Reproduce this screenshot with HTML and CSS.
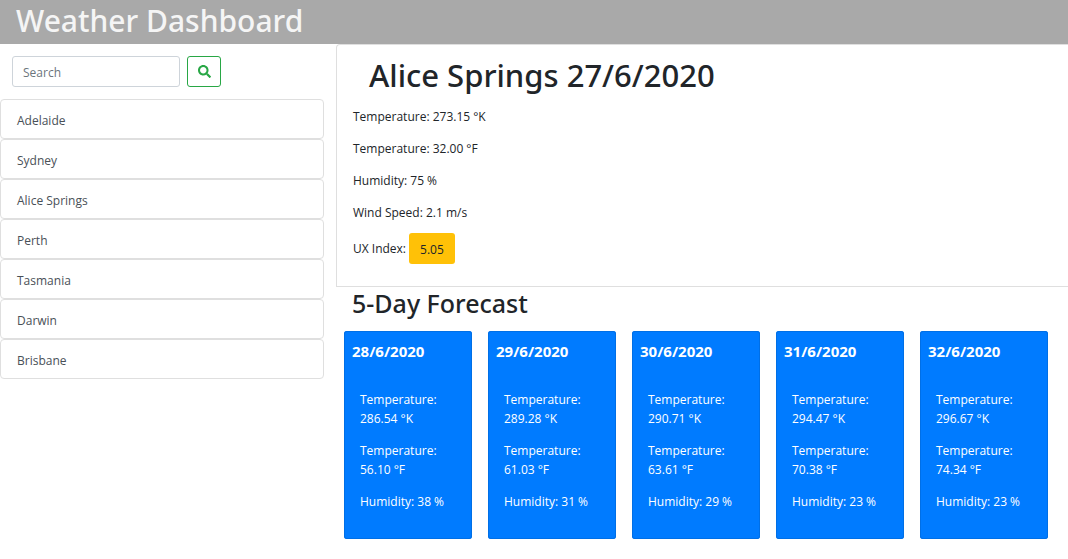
FILE: index.html
```html
<!DOCTYPE html>
<html lang="en">
<head>
<meta charset="utf-8">
<meta name="viewport" content="width=device-width, initial-scale=1">
<title>Weather Dashboard</title>
<link rel="stylesheet" href="styles.css">
</head>
<body>
<header class="site-header"><h1 class="site-title">Weather Dashboard</h1></header>
<div class="layout">
  <aside class="sidebar">
    <form class="search">
      <input class="search-input" type="search" placeholder="Search" aria-label="Search">
      <button class="search-button" type="button" aria-label="Search for a city">
        <svg class="search-icon" viewBox="0 0 512 512" aria-hidden="true"><path fill="currentColor" d="M505 442.700 405.300 343c-4.500-4.500-10.600-7-17-7H372c27.600-35.300 44-79.700 44-128C416 93.100 322.900 0 208 0S0 93.100 0 208s93.100 208 208 208c48.300 0 92.700-16.400 128-44v16.300c0 6.400 2.500 12.500 7 17l99.700 99.700c9.400 9.400 24.600 9.400 33.900 0l28.300-28.300c9.400-9.400 9.400-24.600.1-34zM208 336c-70.700 0-128-57.200-128-128 0-70.700 57.200-128 128-128 70.700 0 128 57.200 128 128 0 70.700-57.200 128-128 128z"/></svg>
      </button>
    </form>
    <nav class="cities" aria-label="Cities">
      <button class="city" type="button">Adelaide</button>
      <button class="city" type="button">Sydney</button>
      <button class="city" type="button">Alice Springs</button>
      <button class="city" type="button">Perth</button>
      <button class="city" type="button">Tasmania</button>
      <button class="city" type="button">Darwin</button>
      <button class="city" type="button">Brisbane</button>
    </nav>
  </aside>
  <main class="content">
    <section class="current">
      <h2 class="current-title">Alice Springs 27/6/2020</h2>
      <div class="current-readings">
        <p class="reading">Temperature: 273.15 °K</p>
        <p class="reading">Temperature: 32.00 °F</p>
        <p class="reading">Humidity: 75 %</p>
        <p class="reading">Wind Speed: 2.1 m/s</p>
      </div>
      <p class="index-row">UX Index: <button class="index-value" type="button">5.05</button></p>
    </section>
    <section class="forecast">
      <h2 class="forecast-title">5-Day Forecast</h2>
      <div class="days">
        <article class="day"><h3 class="day-title">28/6/2020</h3><div class="day-body"><p class="reading">Temperature: 286.54 °K</p><p class="reading">Temperature: 56.10 °F</p><p class="reading">Humidity: 38 %</p></div></article>
        <article class="day"><h3 class="day-title">29/6/2020</h3><div class="day-body"><p class="reading">Temperature: 289.28 °K</p><p class="reading">Temperature: 61.03 °F</p><p class="reading">Humidity: 31 %</p></div></article>
        <article class="day"><h3 class="day-title">30/6/2020</h3><div class="day-body"><p class="reading">Temperature: 290.71 °K</p><p class="reading">Temperature: 63.61 °F</p><p class="reading">Humidity: 29 %</p></div></article>
        <article class="day"><h3 class="day-title">31/6/2020</h3><div class="day-body"><p class="reading">Temperature: 294.47 °K</p><p class="reading">Temperature: 70.38 °F</p><p class="reading">Humidity: 23 %</p></div></article>
        <article class="day"><h3 class="day-title">32/6/2020</h3><div class="day-body"><p class="reading">Temperature: 296.67 °K</p><p class="reading">Temperature: 74.34 °F</p><p class="reading">Humidity: 23 %</p></div></article>
      </div>
    </section>
  </main>
</div>
</body>
</html>
```
FILE: styles.css
```css
* { box-sizing: border-box; }
body {
  margin: 0;
  font-family: "Segoe UI", "Open Sans", "Noto Sans", sans-serif;
  font-size: 12px;
  line-height: 19px;
  color: #212529;
  background: #fff;
}
h1, h2, h3, p { margin: 0; }
h1, h2 { font-family: "Segoe UI", "Noto Sans", sans-serif; font-weight: 500; }
input, button { font: inherit; }
.site-header { padding: 2px 16px 4px; background: #a9a9a9; }
.site-title { font-size: 30px; line-height: 38px; color: #f5f5f5; }
.layout { display: grid; grid-template-columns: 324fr 732fr; gap: 12px; }
.search { display: flex; gap: 7px; padding: 12px; }
.search-input {
  width: 56%;
  height: 31px;
  padding: 5px 10px 3px;
  border: 1px solid #ced4da;
  border-radius: 3px;
  color: #495057;
  background: #fff;
  appearance: none;
}
.search-input::placeholder { color: #6c757d; opacity: 1; }
.search-button {
  display: flex;
  align-items: center;
  justify-content: center;
  width: 34px;
  height: 31px;
  padding: 0;
  border: 1px solid #28a745;
  border-radius: 3px;
  color: #28a745;
  background: #fff;
}
.search-icon { width: 13px; height: 13px; }
.cities { display: flex; flex-direction: column; }
.city {
  height: 40px;
  padding: 11px 16px 9px;
  border: 1px solid #dfdfdf;
  border-radius: 4px;
  color: #495057;
  background: #fff;
  text-align: left;
}
.content { min-width: 0; }
.current {
  padding: 11px 16px 22px;
  border: 1px solid #dfdfdf;
  border-right: 0;
  border-radius: 4px 0 0 0;
}
.current-title { margin-bottom: 13px; padding-left: 16px; font-size: 31px; line-height: 38px; }
.reading { margin-bottom: 13px; }
.current-readings { display: grid; gap: 13px; margin-bottom: 11px; }
.current-readings .reading { margin: 0; }
.index-row { display: flex; align-items: center; gap: 3px; }
.index-value {
  height: 31px;
  padding: 2px 11px 0;
  border: 0;
  border-radius: 3px;
  color: #212529;
  background: #ffc107;
}
.forecast { padding-right: 12px; }
.forecast-title { padding: 0 16px; font-size: 25px; line-height: 32px; }
.days { display: grid; grid-template-columns: repeat(5, 1fr); gap: 16px; padding: 12px 8px; }
.day { padding: 8px; border-radius: 3px; color: #fff; background: #007bff; box-shadow: inset 0 0 0 1px #006fe6; }
.day-title { font-size: 15px; font-weight: 700; line-height: 24px; }
.day-body { padding: 27px 0 7px 8px; }
```
